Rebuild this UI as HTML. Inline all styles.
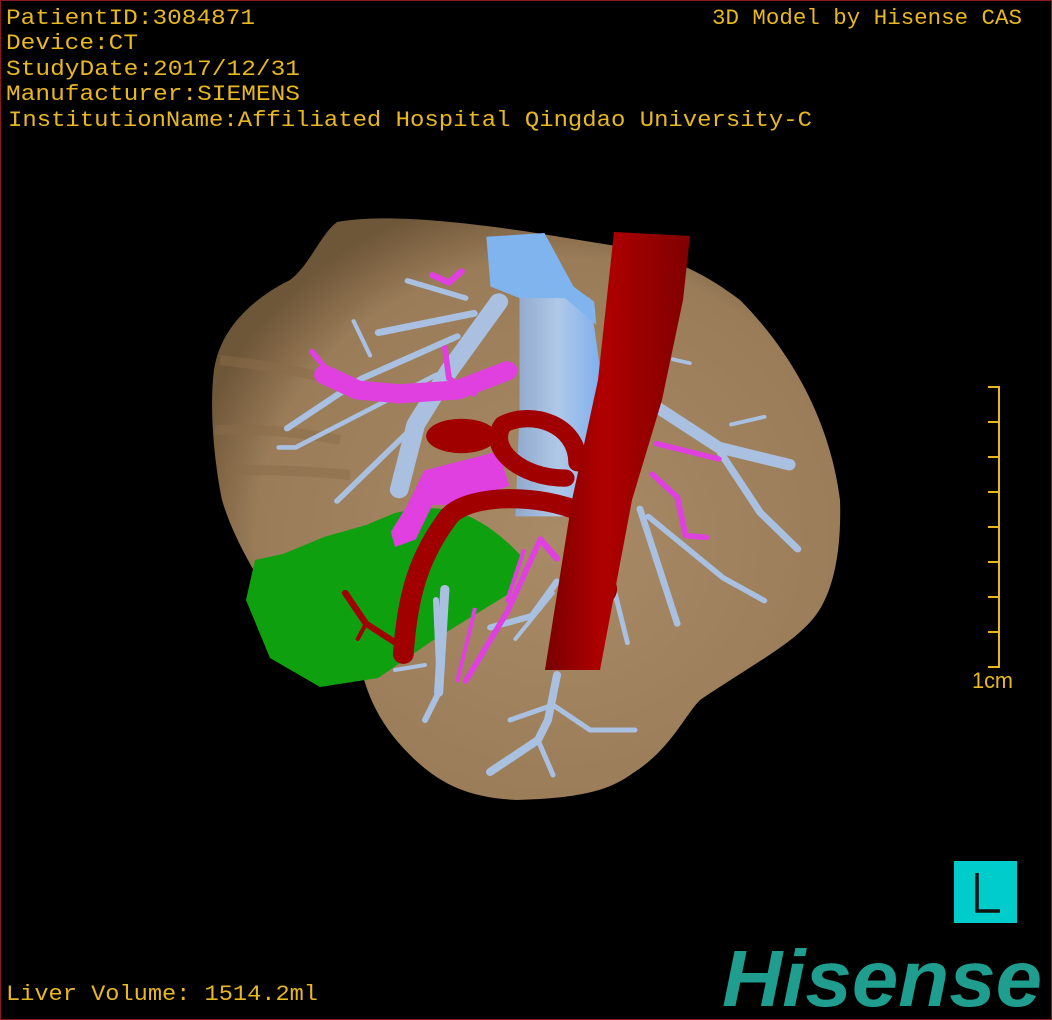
<!DOCTYPE html>
<html><head><meta charset="utf-8"><style>
html,body{margin:0;padding:0;background:#000;}
svg{display:block;}
</style></head><body>
<svg width="1052" height="1020" viewBox="0 0 1052 1020" xmlns="http://www.w3.org/2000/svg">
<defs>
<radialGradient id="liv" cx="0.55" cy="0.55" r="0.6">
<stop offset="0" stop-color="#a88a66"/><stop offset="0.8" stop-color="#9a7c58"/><stop offset="1" stop-color="#6e5638"/>
</radialGradient>
<linearGradient id="ao" x1="0" y1="0" x2="1" y2="0">
<stop offset="0" stop-color="#7a0000"/><stop offset="0.4" stop-color="#b00000"/><stop offset="1" stop-color="#800000"/>
</linearGradient>
<linearGradient id="ivc" x1="0" y1="0" x2="1" y2="0">
<stop offset="0" stop-color="#8fa8cc"/><stop offset="0.5" stop-color="#b0c8e8"/><stop offset="1" stop-color="#7fb0ee"/>
</linearGradient>
</defs>
<rect width="1052" height="1020" fill="#000"/>
<rect x="0.5" y="0.5" width="1051" height="1019" fill="none" stroke="#8b1a1a"/>

<!-- liver -->
<path d="M337,222 C380,214 450,220 530,232 L610,245 C650,252 690,262 740,300 C790,350 830,420 840,500 C842,560 830,600 812,620 C790,645 760,660 700,700 C685,715 670,750 633,773 C610,790 583,798 517,800 C470,798 440,785 410,755 C385,730 365,700 357,648 L300,640 C270,600 235,545 222,500 C212,450 210,400 214,370 C220,330 250,300 290,280 C310,265 320,235 337,222 Z" fill="url(#liv)"/>
<path d="M220,360 C260,365 300,370 330,380 M215,430 C260,428 300,432 340,440 M225,470 C260,470 300,470 350,475" stroke="#8a6c4a" stroke-width="10" fill="none" opacity="0.5"/>

<!-- green -->
<path d="M366,525 L395,513 C430,505 470,500 523,558 C515,580 510,590 507,595 L432,641 L378,678 L320,687 L270,658 L246,600 L255,560 L283,554 L324,537 Z" fill="#0fa010"/>

<g transform="translate(200,210) scale(0.415,0.383)">
<!-- light blue branches -->
<g stroke="#a9c0e0" fill="none" stroke-linecap="round" stroke-linejoin="round">
<path d="M720,240 L600,420 L520,560 L480,730" stroke-width="45"/>
<path d="M660,270 L430,320" stroke-width="18"/>
<path d="M640,230 L500,185" stroke-width="14"/>
<path d="M620,330 L390,440 L210,570" stroke-width="16"/>
<path d="M570,430 L230,620 L190,620" stroke-width="12"/>
<path d="M370,290 L410,380" stroke-width="10"/>
<path d="M520,560 L330,760" stroke-width="14"/>
<path d="M1080,500 L1250,620 L1420,665" stroke-width="30"/>
<path d="M1240,610 L1350,790 L1440,885" stroke-width="18"/>
<path d="M1280,560 L1360,540" stroke-width="10"/>
<path d="M1060,780 L1150,1080" stroke-width="16"/>
<path d="M1080,800 L1260,960 L1360,1020" stroke-width="14"/>
<path d="M1000,1000 L1030,1130" stroke-width="12"/>
<path d="M860,970 L800,1060 L700,1090" stroke-width="16"/>
<path d="M850,1000 L760,1120" stroke-width="10"/>
<path d="M590,990 L575,1260" stroke-width="22"/>
<path d="M1140,390 L1180,400" stroke-width="10"/>
</g>
<!-- IVC -->
<path d="M770,210 L830,180 L880,210 L940,230 L965,420 L935,620 L900,800 L760,800 L770,520 L770,250 Z" fill="url(#ivc)"/>
<path d="M690,70 L830,60 L900,200 L950,240 L955,300 L880,230 L770,230 L700,200 Z" fill="#80b4ee"/>
<!-- magenta -->
<g stroke="#e040e0" fill="none" stroke-linecap="round" stroke-linejoin="round">
<path d="M300,430 L380,470 L480,480 L620,470 L740,420" stroke-width="50"/>
<path d="M270,370 L300,410" stroke-width="14"/>
<path d="M590,360 L600,440 L660,480" stroke-width="14"/>
<path d="M560,170 L600,190 L630,160" stroke-width="16"/>
<path d="M820,860 L740,1050 L640,1230" stroke-width="14"/>
<path d="M780,890 L740,1020" stroke-width="10"/>
<path d="M1100,610 L1250,650" stroke-width="14"/>
<path d="M1090,690 L1150,750 L1170,850 L1220,855" stroke-width="14"/>
<path d="M820,860 L860,910" stroke-width="16"/>
</g>
<path d="M540,680 L720,630 L745,720 L620,770 L560,770 L520,860 L470,880 L460,840 L500,770 Z" fill="#e040e0"/>
<!-- red arteries -->
<g stroke="#a00000" fill="none" stroke-linecap="round" stroke-linejoin="round">
<path d="M910,660 C910,560 800,520 730,560 C690,620 770,700 880,700" stroke-width="45"/>
<path d="M920,790 C820,740 650,740 600,800 C530,900 500,1000 490,1160" stroke-width="50"/>
<path d="M350,1000 L400,1080 L500,1150" stroke-width="16"/>
<path d="M400,1080 L380,1120" stroke-width="10"/>
</g>
<ellipse cx="630" cy="590" rx="85" ry="45" fill="#a00000"/>
<ellipse cx="970" cy="990" rx="35" ry="40" fill="#900000"/>
</g>

<!-- aorta -->
<path d="M614,232 L690,236 L683,300 L662,400 L632,500 L600,670 L545,670 L572,500 L598,380 Z" fill="url(#ao)"/>

<!-- bottom blue branches (real coords) -->
<g stroke="#a9c0e0" fill="none" stroke-linecap="round" stroke-linejoin="round">
<path d="M557,675 L548,720 L538,740 L490,772" stroke-width="8"/>
<path d="M538,740 L553,775" stroke-width="5"/>
<path d="M553,705 L590,730 L635,730" stroke-width="5"/>
<path d="M553,705 L510,720" stroke-width="5"/>
<path d="M436,600 L440,690 L425,720" stroke-width="6"/>
<path d="M425,665 L395,670" stroke-width="4"/>
</g>
<path d="M475,608 L470,630 L457,682" stroke="#e040e0" stroke-width="4" fill="none"/>

<!-- text -->
<g font-family="'Liberation Mono','Liberation Sans',monospace" font-size="22" fill="#e8b820">
<text x="6" y="24" textLength="249" lengthAdjust="spacingAndGlyphs">PatientID:3084871</text>
<text x="6" y="49" textLength="132" lengthAdjust="spacingAndGlyphs">Device:CT</text>
<text x="6" y="75" textLength="294" lengthAdjust="spacingAndGlyphs">StudyDate:2017/12/31</text>
<text x="6" y="100" textLength="294" lengthAdjust="spacingAndGlyphs">Manufacturer:SIEMENS</text>
<text x="8" y="126" textLength="804" lengthAdjust="spacingAndGlyphs">InstitutionName:Affiliated Hospital Qingdao University-C</text>
<text x="712" y="24" textLength="310" lengthAdjust="spacingAndGlyphs">3D Model by Hisense CAS</text>
<text x="6" y="1000" textLength="312" lengthAdjust="spacingAndGlyphs">Liver Volume: 1514.2ml</text>
<text x="972" y="688" textLength="41" lengthAdjust="spacingAndGlyphs" font-family="'Liberation Sans',sans-serif">1cm</text>
</g>

<!-- scale bar -->
<g stroke="#e8b820" stroke-width="2">
<line x1="999" y1="386" x2="999" y2="668"/>
<line x1="988" y1="387" x2="999" y2="387"/>
<line x1="988" y1="422" x2="999" y2="422"/>
<line x1="988" y1="457" x2="999" y2="457"/>
<line x1="988" y1="492" x2="999" y2="492"/>
<line x1="988" y1="527" x2="999" y2="527"/>
<line x1="988" y1="562" x2="999" y2="562"/>
<line x1="988" y1="597" x2="999" y2="597"/>
<line x1="988" y1="632" x2="999" y2="632"/>
<line x1="988" y1="667" x2="999" y2="667"/>
</g>

<!-- L box -->
<rect x="954" y="861" width="63" height="62" fill="#00cccc"/>
<path d="M977,873 L977,911 L1000,911" stroke="#111" stroke-width="3.5" fill="none"/>

<!-- Hisense -->
<text x="722" y="1006" font-family="'Liberation Sans',sans-serif" font-weight="bold" font-style="italic" font-size="80" fill="#1f9e90" textLength="320" lengthAdjust="spacingAndGlyphs">Hisense</text>
</svg>
</body></html>
